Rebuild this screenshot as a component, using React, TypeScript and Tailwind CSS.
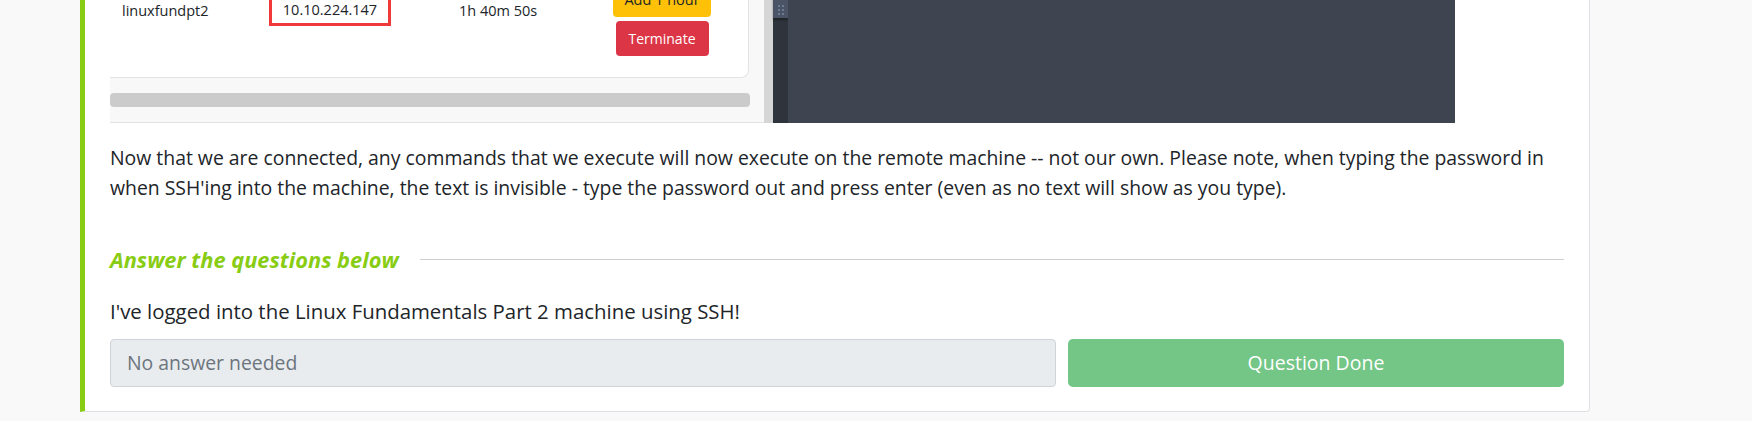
import React from "react";

export default function App() {
  return (
    <div className="h-[421px] w-full overflow-hidden bg-[#f9f9f9] flex flex-col justify-end pl-[80px] pb-[9px] font-['Open_Sans',sans-serif] text-[#212529]">
      <div className="w-[1510px] shrink-0 bg-white border border-[#dee2e6] border-l-[5px] border-l-[#88cc14] rounded-br-[4px] px-[25px] pb-[24px]">
        {/* split pane */}
        <div className="flex h-[160px] w-[1345px]">
          <div className="w-[654px] h-full bg-[#f8f8f8] border-b border-[#e2e2e2] flex flex-col justify-end overflow-hidden">
            <div className="w-[639px] shrink-0 bg-white border border-l-0 border-[#e3e3e3] rounded-br-[8px] pb-[21px] flex items-start text-[14.5px] leading-[20px]">
              <div className="w-[159px] pl-[12px] pt-[19px]">linuxfundpt2</div>
              <div className="w-[122px] h-[40px] mt-[4px] pt-[11px] border-[3px] border-[#f03a3a] text-center">10.10.224.147</div>
              <div className="w-[154px] ml-[68px] pt-[19px]">1h 40m 50s</div>
              <div className="w-[98px] flex flex-col items-center gap-[4px]">
                <div className="w-[98px] h-[35px] bg-[#ffc107] rounded-[4px] flex items-center justify-center text-[#212529]">Add 1 hour</div>
                <div className="w-[93px] h-[35px] bg-[#dc3545] rounded-[4px] flex items-center justify-center text-white text-[14px]">Terminate</div>
              </div>
            </div>
            <div className="mt-[15px] mb-[15px] h-[14px] w-[640px] bg-[#cbcbcb] rounded-[4px]" />
          </div>
          <div className="w-[9px] h-full bg-[#d6d6d6]" />
          <div className="w-[682px] h-full flex">
            <div className="w-[15px] h-full bg-[#2f343c] flex flex-col">
              <div className="h-[55px] bg-[#4a5466] flex flex-col justify-end items-center pb-[3px] shadow-[0_2px_2px_rgba(0,0,0,0.35)]">
                <div className="grid grid-cols-2 gap-[2px]">
                  <div className="w-[2px] h-[2px] bg-[#6d7b92]" />
                  <div className="w-[2px] h-[2px] bg-[#6d7b92]" />
                  <div className="w-[2px] h-[2px] bg-[#6d7b92]" />
                  <div className="w-[2px] h-[2px] bg-[#6d7b92]" />
                  <div className="w-[2px] h-[2px] bg-[#6d7b92]" />
                  <div className="w-[2px] h-[2px] bg-[#6d7b92]" />
                </div>
              </div>
            </div>
            <div className="flex-1 h-full bg-[#3f4451]" />
          </div>
        </div>

        <p className="mt-[20px] text-[19.4px] leading-[30px]">
          Now that we are connected, any commands that we execute will now execute on the remote machine -- not our own. Please note, when typing the password in when SSH'ing into the machine, the text is invisible - type the password out and press enter (even as no text will show as you type).
        </p>

        <div className="mt-[44px] flex items-center gap-[21px]">
          <h3 className="text-[21.8px] leading-[25px] font-bold italic text-[#88cc14] whitespace-nowrap">Answer the questions below</h3>
          <div className="flex-1 h-px bg-[#cfcfcf]" />
        </div>

        <p className="mt-[24px] text-[20.4px] leading-[30px]">I've logged into the Linux Fundamentals Part 2 machine using SSH!</p>

        <div className="mt-[13px] flex gap-[12px]">
          <div className="flex-1 h-[48px] bg-[#e9ecef] border border-[#ced4da] rounded-[4px] pl-[16px] flex items-center text-[19.4px] text-[#6c757d]">No answer needed</div>
          <div className="w-[496px] h-[48px] bg-[#73c686] rounded-[5px] flex items-center justify-center text-[19.5px] text-white">Question Done</div>
        </div>
      </div>
    </div>
  );
}
